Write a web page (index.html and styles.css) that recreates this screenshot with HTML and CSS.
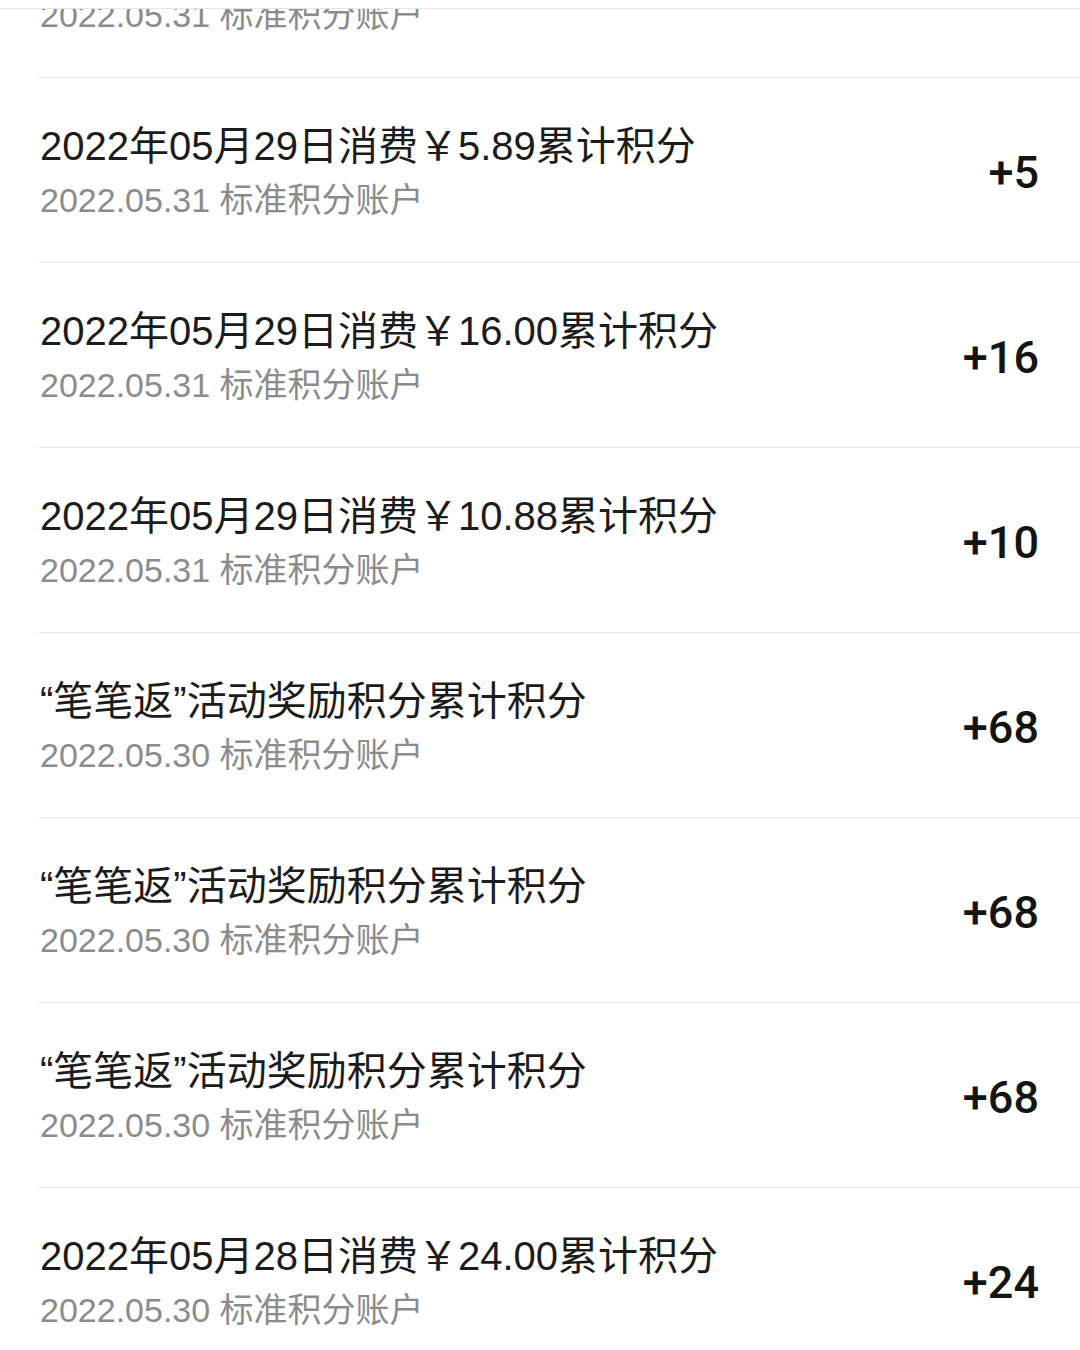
FILE: index.html
```html
<!DOCTYPE html>
<html lang="zh-CN">
<head>
<meta charset="utf-8">
<title>积分明细</title>
<link rel="stylesheet" href="styles.css">
</head>
<body>
<div class="topbar"></div>
<div class="viewport">
  <ul class="list">
    <li class="row row-clipped">
      <div class="info">
        <div class="sub">2022.05.31 标准积分账户</div>
      </div>
    </li>
    <li class="row">
      <div class="info">
        <div class="title">2022年05月29日消费￥5.89累计积分</div>
        <div class="sub">2022.05.31 标准积分账户</div>
      </div>
      <div class="amount">+5</div>
    </li>
    <li class="row">
      <div class="info">
        <div class="title">2022年05月29日消费￥16.00累计积分</div>
        <div class="sub">2022.05.31 标准积分账户</div>
      </div>
      <div class="amount">+16</div>
    </li>
    <li class="row">
      <div class="info">
        <div class="title">2022年05月29日消费￥10.88累计积分</div>
        <div class="sub">2022.05.31 标准积分账户</div>
      </div>
      <div class="amount">+10</div>
    </li>
    <li class="row">
      <div class="info">
        <div class="title">“笔笔返”活动奖励积分累计积分</div>
        <div class="sub">2022.05.30 标准积分账户</div>
      </div>
      <div class="amount">+68</div>
    </li>
    <li class="row">
      <div class="info">
        <div class="title">“笔笔返”活动奖励积分累计积分</div>
        <div class="sub">2022.05.30 标准积分账户</div>
      </div>
      <div class="amount">+68</div>
    </li>
    <li class="row">
      <div class="info">
        <div class="title">“笔笔返”活动奖励积分累计积分</div>
        <div class="sub">2022.05.30 标准积分账户</div>
      </div>
      <div class="amount">+68</div>
    </li>
    <li class="row">
      <div class="info">
        <div class="title">2022年05月28日消费￥24.00累计积分</div>
        <div class="sub">2022.05.30 标准积分账户</div>
      </div>
      <div class="amount">+24</div>
    </li>
  </ul>
</div>
</body>
</html>
```
FILE: styles.css
```css
html, body {
  margin: 0;
  padding: 0;
  background: #ffffff;
  height: 1350px;
  overflow: hidden;
}
body {
  font-family: "Liberation Sans", "Noto Sans CJK SC", sans-serif;
}
.topbar {
  height: 8px;
  background: #ffffff;
  border-bottom: 1px solid #e6e6e6;
}
.viewport {
  height: 1341px;
  overflow: hidden;
}
.list {
  list-style: none;
  margin: 0;
  padding: 0;
}
.row {
  margin-left: 38px;
  padding: 6px 41px 0 2px;
  box-sizing: border-box;
  height: 185px;
  border-bottom: 1px solid #e8e8e8;
  display: flex;
  align-items: center;
  justify-content: space-between;
}
.row-clipped {
  height: 69px;
  padding-top: 0;
  align-items: flex-start;
}
.row-clipped .info {
  margin-top: -21px;
}
.info {
  display: flex;
  flex-direction: column;
}
.title {
  font-size: 40px;
  line-height: 54px;
  color: #1c1c1c;
  white-space: nowrap;
}
.sub {
  font-size: 34px;
  line-height: 54px;
  color: #8c8c8c;
  white-space: nowrap;
}
.amount {
  font-family: Roboto, "Liberation Sans", sans-serif;
  font-size: 45px;
  font-weight: 500;
  color: #141414;
  line-height: 54px;
}
```
